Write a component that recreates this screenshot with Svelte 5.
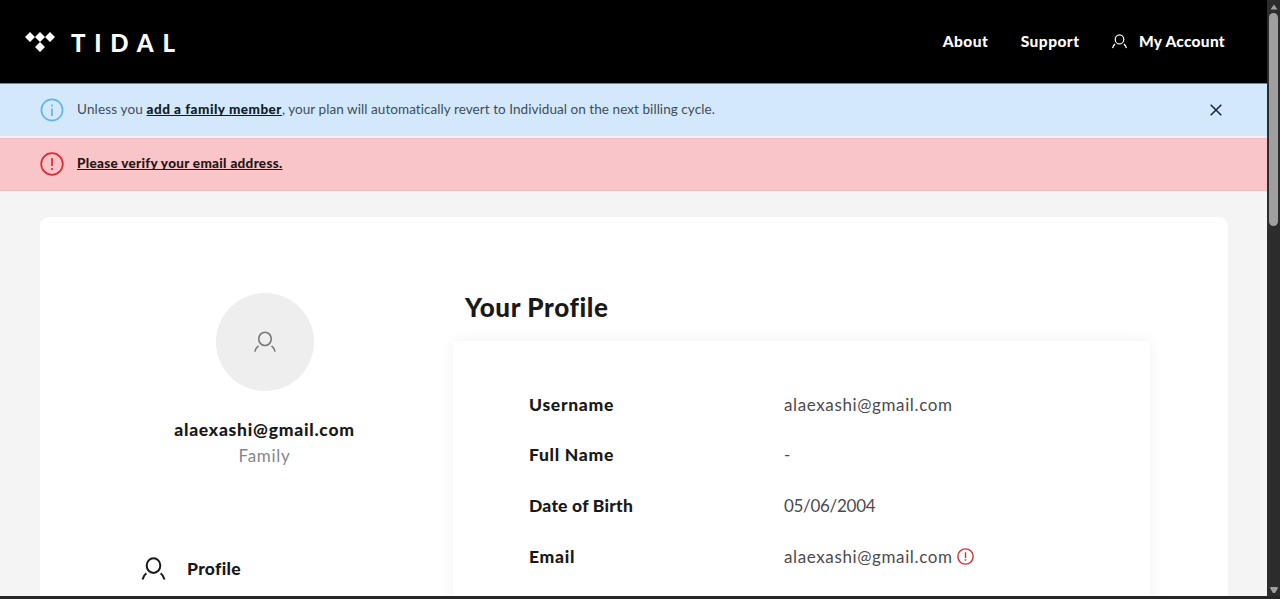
<script lang="ts">
  const fields = [
    { label: "Username", value: "alaexashi@gmail.com", key: "username" },
    { label: "Full Name", value: "-", key: "fullname" },
    { label: "Date of Birth", value: "05/06/2004", key: "birth" },
    { label: "Email", value: "alaexashi@gmail.com", key: "email", warning: true },
  ];
</script>

{#snippet person(cls: string)}
  <svg class={cls} viewBox="0 0 24 24" fill="none" stroke="currentColor">
    <ellipse cx="12" cy="8.600" rx="6.800" ry="7.300" />
    <path d="M1 22.500c.6-2.900 1.700-4.700 3.900-6.300M23 22.500c-.6-2.900-1.700-4.700-3.900-6.300" />
  </svg>
{/snippet}

{#snippet alert(cls: string)}
  <svg class={cls} viewBox="0 0 24 24" fill="none" stroke="currentColor">
    <circle cx="12" cy="12" r="10.800" />
    <path d="M12 6v8M12 16v2" />
  </svg>
{/snippet}

<div class="window">
  <div class="page">
    <header>
      <a class="brand" href="#home" aria-label="TIDAL">
        <svg class="mark" viewBox="0 0 30 20" fill="#fff">
          <path d="M5 0l5 5-5 5-5-5zM15 0l5 5-5 5-5-5zM25 0l5 5-5 5-5-5zM15 10l5 5-5 5-5-5z" />
        </svg>
        <span class="wordmark">TIDAL</span>
      </a>
      <nav>
        <a class="about" href="#about">About</a>
        <a class="support" href="#support">Support</a>
        <a class="account" href="#account">{@render person("nav-icon")}<span>My Account</span></a>
      </nav>
    </header>

    <div class="banner info">
      <svg class="banner-icon" viewBox="0 0 24 24" fill="none" stroke="currentColor">
        <circle cx="12" cy="12" r="10.600" />
        <path d="M12 6.500v2M12 10.500v7.500" />
      </svg>
      <p>
        <span class="lead">Unless you{" "}</span><a class="member" href="#family">add a family member</a><span class="rest">, your plan will automatically revert to Individual on the next billing cycle.</span>
      </p>
      <button aria-label="Close">
        <svg viewBox="0 0 12 12" fill="none" stroke="currentColor"><path d="M.7.7l10.600 10.600M11.300.7L.7 11.300" /></svg>
      </button>
    </div>
    <div class="banner error">
      {@render alert("banner-icon")}
      <p><a class="verify" href="#verify">Please verify your email address.</a></p>
    </div>

    <main>
      <aside>
        <div class="avatar">{@render person("avatar-icon")}</div>
        <strong class="user">alaexashi@gmail.com</strong>
        <span class="plan">Family</span>
        <a class="menu-item" href="#profile">{@render person("menu-icon")}<span>Profile</span></a>
      </aside>
      <section>
        <h1>Your Profile</h1>
        <dl>
          {#each fields as field}
            <div class="row {field.key}">
              <dt>{field.label}</dt>
              <dd>
                <span>{field.value}</span>
                {#if field.warning}{@render alert("warning-icon")}{/if}
              </dd>
            </div>
          {/each}
        </dl>
      </section>
    </main>
  </div>

  <div class="scrollbar">
    <svg viewBox="0 0 10 7"><path d="M5 1l3.500 5h-7z" /></svg>
    <div class="thumb"></div>
    <svg class="down" viewBox="0 0 10 8"><path d="M1.500 1h7l.5 1-3 5h-2l-3-5z" /></svg>
  </div>
</div>

<style>
  :global(body) {
    margin: 0;
    overflow: hidden;
  }
  .window {
    box-sizing: border-box;
    display: grid;
    grid-template-columns: 1267px 13px;
    width: 1280px;
    height: 599px;
    border-bottom: 3px solid #272526;
    font-family: Lato, "Open Sans", sans-serif;
    color: #191919;
  }
  .page {
    height: 596px;
    overflow: hidden;
    background: #f4f4f4;
  }
  a {
    color: inherit;
    text-decoration: none;
  }

  header {
    box-sizing: border-box;
    display: flex;
    align-items: center;
    justify-content: space-between;
    height: 83px;
    padding: 0 42px 0 25px;
    background: #000;
    color: #fff;
  }
  .brand {
    display: flex;
    align-items: center;
    gap: 16px;
    padding-top: 2px;
  }
  .mark {
    width: 30px;
    height: 20px;
    margin-top: -2px;
  }
  .wordmark {
    font-size: 24px;
    font-weight: 900;
    line-height: 28px;
    letter-spacing: 8.800px;
  }
  nav {
    display: flex;
    gap: 32.500px;
    font-size: 15.500px;
    font-weight: 900;
    line-height: 20px;
    padding-bottom: 1px;
  }
  .about,
  .support {
    letter-spacing: 0.45px;
  }
  .account {
    display: flex;
    align-items: center;
    gap: 12px;
    letter-spacing: 0.28px;
  }
  .nav-icon {
    width: 15px;
    height: 15px;
    margin-top: 1px;
    stroke-width: 2;
  }

  .banner {
    box-sizing: border-box;
    display: flex;
    align-items: center;
    height: 53px;
    padding: 0 45px 1px 40px;
    font-size: 13.500px;
  }
  .banner p {
    display: flex;
    flex: 1;
    margin: 0 0 0 13px;
    padding-bottom: 1px;
    line-height: 20px;
    white-space: pre;
  }
  .banner a {
    font-weight: 900;
    text-decoration: underline;
    text-decoration-skip-ink: none;
    text-underline-offset: 1px;
  }
  .lead {
    letter-spacing: 0.16px;
  }
  .member {
    letter-spacing: 0.5px;
  }
  .rest {
    letter-spacing: 0.06px;
  }
  .verify {
    letter-spacing: 0.31px;
  }
  .banner-icon {
    width: 24px;
    height: 24px;
    stroke-width: 1.700;
  }
  .info {
    padding-bottom: 1px;
    background: #d3e8fb;
    border-top: 1px solid #79848d;
    color: #3e4c5a;
  }
  .info .banner-icon {
    color: #62b2ed;
  }
  .info a {
    color: #101c28;
  }
  .error {
    margin-top: 2px;
    background: #fac5c8;
    border-top: 1px solid #f3b9be;
    border-bottom: 1px solid #f1bcc0;
    color: #241719;
    box-shadow: 0 -2px #f5edf3;
  }
  .error .banner-icon {
    color: #df2935;
  }
  .error p {
    padding-bottom: 2px;
  }
  button {
    width: 12px;
    height: 12px;
    padding: 0;
    border: 0;
    background: none;
    color: #152434;
  }
  button svg {
    display: block;
    stroke-width: 1.500;
  }

  main {
    display: flex;
    width: 1188px;
    height: 500px;
    margin: 26px 0 0 40px;
    border-radius: 9px;
    background: #fff;
  }
  aside {
    display: flex;
    flex: none;
    flex-direction: column;
    align-items: center;
    width: 449px;
    margin-right: -36px;
    padding-top: 76px;
  }
  .avatar {
    display: grid;
    place-items: center;
    width: 98px;
    height: 98px;
    border-radius: 50%;
    background: #eee;
    color: #777;
  }
  .avatar-icon {
    width: 24px;
    height: 22px;
    stroke-width: 1.700;
  }
  .user {
    margin-top: 27px;
    font-size: 17.500px;
    font-weight: 900;
    line-height: 24px;
    letter-spacing: 0.750px;
  }
  .plan {
    margin-top: 2px;
    color: #85858e;
    font-size: 17px;
    line-height: 24px;
    letter-spacing: 0.700px;
  }
  .menu-item {
    display: flex;
    align-self: flex-start;
    align-items: center;
    gap: 21px;
    margin: 88px 0 0 101px;
    font-size: 17.500px;
    font-weight: 900;
    line-height: 26px;
    letter-spacing: 0.300px;
  }
  .menu-icon {
    width: 25px;
    height: 24px;
    stroke-width: 2;
  }

  section {
    width: 697px;
    padding-top: 74px;
  }
  h1 {
    margin: 0 0 18px 12px;
    font-size: 26px;
    font-weight: 900;
    line-height: 32px;
    letter-spacing: 0.600px;
  }
  dl {
    box-sizing: border-box;
    height: 320px;
    margin: 0;
    padding: 38px 76px;
    border-radius: 4px;
    box-shadow: 0 0 16px rgb(0 0 0 / 0.06);
    font-size: 17px;
  }
  .row {
    display: grid;
    grid-template-columns: 255px 1fr;
    align-items: center;
    height: 50.600px;
  }
  dt {
    font-size: 17.500px;
    font-weight: 900;
    letter-spacing: 0.700px;
  }
  .birth dt {
    letter-spacing: 0.220px;
  }
  dd {
    display: flex;
    align-items: center;
    gap: 4px;
    margin: 0;
    color: #4b4b50;
    letter-spacing: 0.620px;
  }
  .birth dd {
    letter-spacing: -0.300px;
  }
  .warning-icon {
    width: 17px;
    height: 17px;
    color: #d6303b;
    stroke-width: 2;
  }

  .scrollbar {
    display: flex;
    flex-direction: column;
    align-items: center;
    background: #2c2c2c;
  }
  .scrollbar svg {
    width: 10px;
    height: 8px;
    margin: 3px 0 2px;
    fill: #9f9f9f;
  }
  .thumb {
    width: 9px;
    height: 213px;
    border-radius: 5px;
    background: #9f9f9f;
  }
  .scrollbar .down {
    margin-top: auto;
  }
</style>
